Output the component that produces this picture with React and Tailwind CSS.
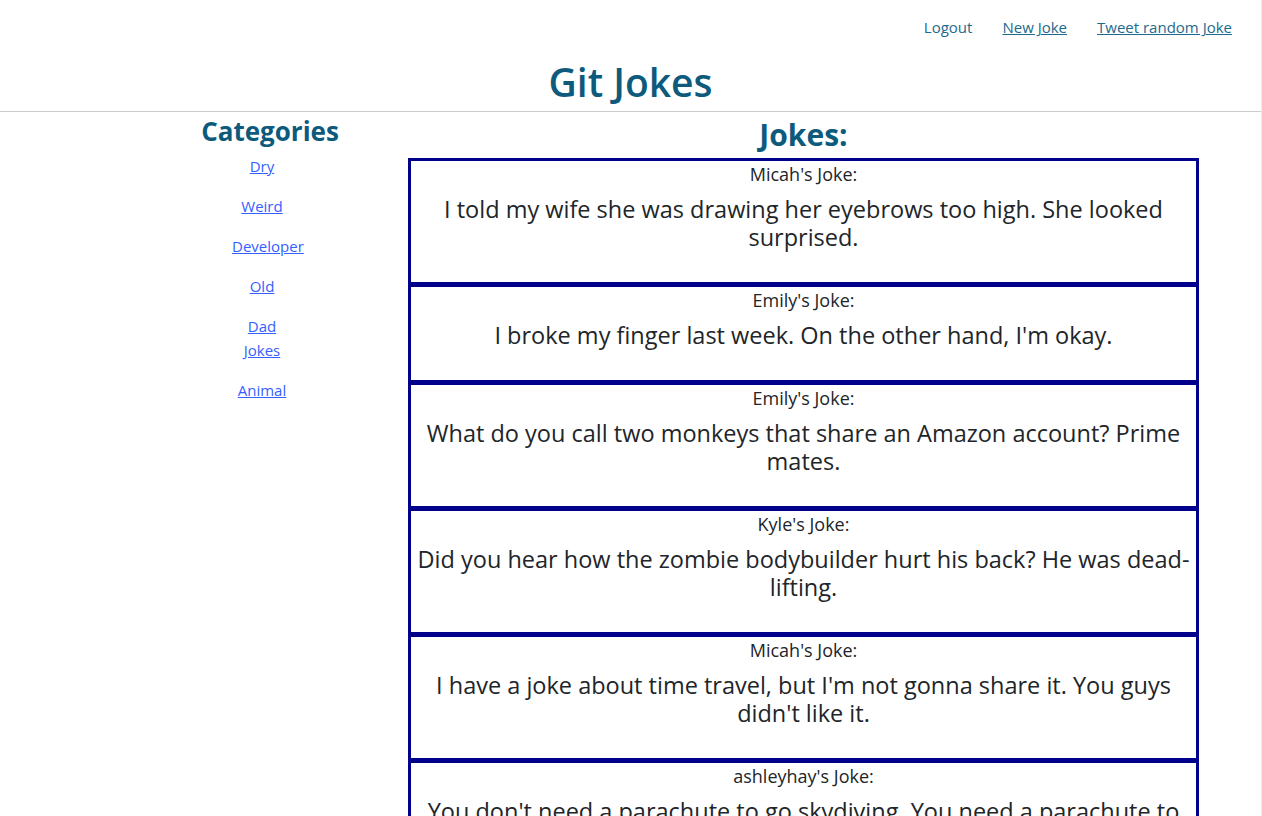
import React from 'react';

const categories = ['Dry', 'Weird', 'Developer', 'Old', 'Dad Jokes', 'Animal'];

const jokes = [
    { author: 'Micah', text: 'I told my wife she was drawing her eyebrows too high. She looked surprised.' },
    { author: 'Emily', text: "I broke my finger last week. On the other hand, I'm okay." },
    { author: 'Emily', text: 'What do you call two monkeys that share an Amazon account? Prime mates.' },
    { author: 'Kyle', text: 'Did you hear how the zombie bodybuilder hurt his back? He was dead-lifting.' },
    { author: 'Micah', text: "I have a joke about time travel, but I'm not gonna share it. You guys didn't like it." },
    { author: 'ashleyhay', text: "You don't need a parachute to go skydiving. You need a parachute to go skydiving twice." },
];

const JokeCard = ({ joke, first }) => (
    <div className={`border-[3px] border-[#00008b] px-[2px] pb-[31px] text-center ${first ? '' : '-mt-px'}`}>
        <h5 className="text-[18px] leading-[26px] font-medium text-[#212529]">{joke.author}'s Joke:</h5>
        <p className="mt-[8px] text-[23.5px] leading-[28px] font-medium text-[#212529]">{joke.text}</p>
    </div>
);

const App = () => {
    return (
        <div
            className="h-screen w-full overflow-hidden bg-white border-r border-[#ececec]"
            style={{ fontFamily: '"Open Sans", "Noto Sans", sans-serif' }}
        >
            {/* Header */}
            <header className="border-b border-[#cccccc]">
                <nav className="flex justify-end items-center gap-[30px] pr-[29px] pt-[17px] text-[15px] leading-[20px] text-[#1d6a8c]">
                    <a href="#">Logout</a>
                    <a href="#" className="underline">New Joke</a>
                    <a href="#" className="underline">Tweet random Joke</a>
                </nav>
                <h1 className="text-center text-[39px] leading-[46px] mt-[22px] pb-[6px] text-[#0d5a7d] font-semibold">Git Jokes</h1>
            </header>

            <main className="flex">
                {/* Categories sidebar */}
                <aside className="ml-[140px] w-[260px] flex flex-col items-center">
                    <h2 className="text-[26px] leading-[38px] font-bold text-[#0d5a7d]">Categories</h2>
                    <ul className="w-[60px] mr-4 flex flex-col gap-[16px] mt-[4px]">
                        {categories.map(cat => (
                            <li key={cat} className="text-center text-[15px] leading-[24px]">
                                <a href="#" className="underline text-[#3560ff]">{cat}</a>
                            </li>
                        ))}
                    </ul>
                </aside>

                {/* Jokes list */}
                <section className="ml-[8px] w-[791px]">
                    <h2 className="text-center text-[30px] leading-[46px] font-bold text-[#0d5a7d]">Jokes:</h2>
                    <div className="flex flex-col">
                        {jokes.map((joke, i) => (
                            <JokeCard key={i} joke={joke} first={i === 0} />
                        ))}
                    </div>
                </section>
            </main>
        </div>
    );
};

export default App;
